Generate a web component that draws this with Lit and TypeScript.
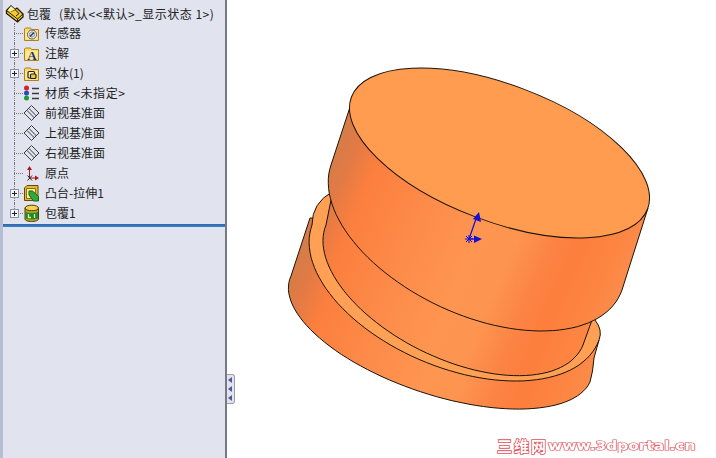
import { LitElement, html, css, svg } from "lit";
import { customElement } from "lit/decorators.js";

type P = [number, number];
/* lower half of an ellipse given its centre and two conjugate semi-diameters, from the left end to the right end */
const arc = (c: P, u: P, v: P) => {
  let d = "";
  for (let i = 0; i <= 60; i++) {
    const t = (Math.PI * i) / 60;
    const x = c[0] - u[0] * Math.cos(t) + v[0] * Math.sin(t);
    const y = c[1] - u[1] * Math.cos(t) + v[1] * Math.sin(t);
    d += `L${x.toFixed(1)} ${y.toFixed(1)}`;
  }
  return d;
};

const diskD = `M310 218${arc([440.5, 329], [149.5, 53], [-28, 60])}Q593 372 594 358L599 340L450 220Z`;
const ringD = `M332 192Q312 203 312 225${arc([455.5, 282.5], [143.5, 57.5], [-29, 80])}Q603 330 595 320L450 220Z`;
const innerD = `M332 195${arc([454.5, 285], [128.5, 60], [-28, 68])}L592 320L450 220Z`;
const topD = `M351 104${arc([476.5, 227.5], [145.5, 62.5], [-28.5, 82.5])}L648 208L500 100Z`;

const folder = (inner: unknown) => svg`<svg width="18" height="18" viewBox="0 0 18 18">
  <path d="M2.500 16.500V5l1-1h5l1 1.500h7v11z" fill="#ffdb62" stroke="#b07f1e"/>
  <rect x="3.500" y="7" width="12" height="8.500" fill="#ffe992"/>
  ${inner}
</svg>`;

const plane = svg`<svg width="20" height="18" viewBox="0 0 20 18" fill="none" stroke="#3a3a3a" stroke-width="1">
  <path d="M2 9 9.500 1.500 17 9l-7.500 7.500z"/><path d="M5 6.500 12.500 14M7 4.500 14.500 12"/>
</svg>`;

const icons: Record<string, unknown> = {
  sensor: folder(svg`<circle cx="10" cy="10.500" r="4.500" fill="#fff" stroke="#555"/><circle cx="10" cy="10.500" r="2.700" fill="#d4dbe8" stroke="#8593ad"/><path d="M8 12.500 12 8.500" stroke="#333" stroke-width="1.200"/>`),
  note: folder(svg`<text x="10" y="15.500" text-anchor="middle" font-family="Liberation Serif" font-weight="700" font-size="13" fill="#1c2f7a">A</text>`),
  body: folder(svg`<rect x="6" y="7.500" width="6.500" height="6.500" rx="1" fill="#fff2b0" stroke="#222" stroke-width="1.200"/><rect x="8.500" y="10" width="5.500" height="4.500" rx="1" fill="#e8c64a" stroke="#222" stroke-width="1.200"/>`),
  material: svg`<svg width="18" height="18" viewBox="0 0 18 18">
    <circle cx="4.500" cy="4" r="2.500" fill="#d8202a"/><circle cx="4.500" cy="9" r="2.500" fill="#2b46c0"/><circle cx="4.500" cy="14" r="2.500" fill="#1f9a38"/>
    <path d="M10 4.500h7M10 9.500h7M10 14.500h7" stroke="#3a3a3a" stroke-width="1.500"/></svg>`,
  plane,
  origin: svg`<svg width="18" height="18" viewBox="0 0 18 18" fill="none">
    <path d="M7.500 14V5" stroke="#a81818"/><path d="M7.500 2 10 6H5z" fill="#a81818"/>
    <path d="M7.500 14H14" stroke="#a81818"/><path d="M17 14l-4-2.500v5z" fill="#a81818"/>
    <path d="M5.500 11.500l4.500 5M10 11.500l-4.500 5" stroke="#222"/></svg>`,
  boss: svg`<svg width="18" height="18" viewBox="0 0 18 18">
    <path d="M2.500 4 5 1.500h11V13l-2 3.500H2.500z" fill="#e8b92f" stroke="#5e4a10"/>
    <path d="M4.500 4.500h9v10h-9z" fill="#ffea90" stroke="#8a7018"/>
    <path d="M7 7h3.500l6 5.500v4.500h-5L7 11z" fill="#2fa83c" stroke="#11661c"/></svg>`,
  wrap: svg`<svg width="18" height="18" viewBox="0 0 18 18">
    <path d="M3 4v11c0 1.500 3 2.500 6.500 2.500S16.500 16.500 16.500 15V4z" fill="#c8a020" stroke="#4e3c08"/>
    <ellipse cx="9.750" cy="4" rx="6.750" ry="2.800" fill="#f2d34c" stroke="#4e3c08"/>
    <path d="M3.500 8q6.250 2 12.500 0v6.500q-6.250 2-12.500 0z" fill="#1f8a2c"/>
    <path d="M6.500 10v3.500H9M12.500 10v4" stroke="#d8f0a0" stroke-width="1.300" fill="none"/></svg>`,
};

const rows = [
  { icon: "sensor", label: "传感器", exp: false, wide: false },
  { icon: "note", label: "注解", exp: true, wide: false },
  { icon: "body", label: "实体(1)", exp: true, wide: false },
  { icon: "material", label: "材质 <未指定>", exp: false, wide: true },
  { icon: "plane", label: "前视基准面", exp: false, wide: false },
  { icon: "plane", label: "上视基准面", exp: false, wide: false },
  { icon: "plane", label: "右视基准面", exp: false, wide: false },
  { icon: "origin", label: "原点", exp: false, wide: false },
  { icon: "boss", label: "凸台-拉伸1", exp: true, wide: false },
  { icon: "wrap", label: "包覆1", exp: true, wide: false },
];

const stops = svg`
  <stop offset="0" stop-color="#d67c48"/><stop offset=".05" stop-color="#e27a45"/>
  <stop offset=".13" stop-color="#fc7f3e"/><stop offset=".3" stop-color="#fd8a48"/>
  <stop offset=".5" stop-color="#fe9550"/><stop offset=".62" stop-color="#fd9450"/>
  <stop offset=".72" stop-color="#fc8444"/><stop offset=".8" stop-color="#fd7e3d"/>
  <stop offset=".92" stop-color="#fd8643"/><stop offset="1" stop-color="#f99050"/>`;

@customElement("app-root")
export class AppRoot extends LitElement {
  static styles = css`
    :host { display: flex; width: 716px; height: 458px; overflow: hidden; background: #fff;
      font-family: "Noto Sans CJK SC", "Liberation Sans", sans-serif; }
    .side { width: 226.500px; height: 458px; flex: none; box-sizing: border-box; background: #e1e4ee;
      border-left: 3px solid #b7bdd2; border-right: 2px solid #777a84; padding-top: 4px; }
    .root { display: flex; align-items: center; height: 19px; padding-left: 2px; gap: 2px;
      font-size: 12px; color: #222; white-space: nowrap; }
    .root .sp { margin-left: 6px; letter-spacing: 0.500px; }
    .row { display: flex; align-items: center; height: 20px; font-size: 12px; color: #222; white-space: nowrap; }
    .row .lab { padding-bottom: 1px; }
    .row .wide { letter-spacing: 0.550px; }
    .gutter { position: relative; width: 19px; height: 20px; flex: none; }
    .gutter::before { content: ""; position: absolute; left: 11px; top: 0; height: 100%;
      border-left: 1px dotted #777; }
    .gutter.last::before { height: 10px; }
    .gutter::after { content: ""; position: absolute; left: 11px; top: 10px; width: 9px;
      border-top: 1px dotted #777; }
    .exp { position: absolute; z-index: 1; left: 7px; top: 6px; width: 9px; height: 9px; box-sizing: border-box;
      border: 1px solid #8b93a8; background: #f4f5f8; }
    .exp::before { content: ""; position: absolute; left: 1px; right: 1px; top: 3px; height: 1px; background: #222; }
    .exp::after { content: ""; position: absolute; top: 1px; bottom: 1px; left: 3px; width: 1px; background: #222; }
    .ic { width: 20px; height: 18px; flex: none; margin-right: 3px; display: flex; position: relative; }
    .ic svg { display: block; }
    .rule { height: 3px; margin-top: 1px; background: linear-gradient(#2c66ad, #3d82c8); }
    .main { position: relative; flex: 1; height: 458px; }
    .scene { position: absolute; left: -226.500px; top: 0; width: 716px; height: 458px; display: block; }
    .grip { position: absolute; left: 0; top: 374px; width: 7px; height: 28px; background: #e1e4ee;
      border: 1px solid #9a9dac; border-left: 0; border-radius: 0 3px 3px 0; display: flex;
      flex-direction: column; align-items: center; justify-content: center; gap: 3px; }
    .grip i { width: 0; height: 0; border-style: solid; border-width: 3px 4px 3px 0;
      border-color: transparent #56568f transparent transparent; }
    .mark { position: absolute; left: 270.500px; top: 436px; display: flex; align-items: center; white-space: nowrap;
      font-weight: 700; line-height: 20px; color: #fff; -webkit-text-stroke: 1.600px #e0505a; paint-order: stroke fill; }
    .mark .cn { font-size: 15px; letter-spacing: 2px; }
    .mark .latin { font-family: "DejaVu Sans", sans-serif; font-size: 15.400px; display: inline-block;
      transform: scaleY(.74); }
  `;

  render() {
    return html`
      <div class="side">
        <div class="root">
          <svg width="20" height="18" viewBox="0 0 20 18">
            <path d="M1.500 5.500 6 1l4 3.500L12 3l6 6v3l-5.500 5L1.500 8.500z" fill="#f3c92f" stroke="#1c1a08" stroke-width="1.300"/>
            <path d="M1.500 5.500 12.500 14v3M12.500 14l5.500-5M6 6.500 10 4.500 14 8.500 11 11" fill="none" stroke="#1c1a08"/>
            <path d="M6 1 10 4.500 6 6.500 2.500 5.500z" fill="#fff0a0"/>
          </svg>
          <span>包覆</span><span class="sp">(默认<<默认>_显示状态 1>)</span>
        </div>
        ${rows.map((r, i) => html`
          <div class="row">
            <div class="gutter ${i === rows.length - 1 ? "last" : ""}">${r.exp ? html`<span class="exp"></span>` : ""}</div>
            <div class="ic">${icons[r.icon]}</div>
            <span class="lab ${r.wide ? "wide" : ""}">${r.label}</span>
          </div>`)}
        <div class="rule"></div>
      </div>
      <div class="main">
        <svg class="scene" viewBox="0 0 716 458">
          <defs>
            <linearGradient id="t" gradientUnits="userSpaceOnUse" x1="329" y1="168" x2="626" y2="300">${stops}</linearGradient>
            <linearGradient id="m" gradientUnits="userSpaceOnUse" x1="295" y1="250" x2="592" y2="382">${stops}</linearGradient>
            <linearGradient id="d" gradientUnits="userSpaceOnUse" x1="288" y1="283" x2="585" y2="415">${stops}</linearGradient>
          </defs>
          <g stroke="#1c1208" stroke-width="1" stroke-linejoin="round">
            <path fill="url(#d)" d=${diskD}/>
            <path fill="#ffa055" d=${ringD}/>
            <path fill="url(#m)" d=${innerD}/>
            <path fill="url(#t)" d=${topD}/>
            <ellipse cx="499.500" cy="153" rx="158.300" ry="68.300" transform="rotate(20.700 499.500 153)" fill="#ff9c50"/>
          </g>
          <g stroke="#1010d8" fill="#1010d8">
            <path d="M469 239 477 216" stroke-width="1.200" fill="none"/>
            <path d="M479 212 481 222 473 219Z" stroke="none"/>
            <path d="M469 239H476" stroke-width="1.200" fill="none"/>
            <path d="M482 239 474 235.500V243Z" stroke="none"/>
            <path d="M466 236l6 6M472 236l-6 6M469 235v8M465 239h8" stroke-width="1" fill="none"/>
          </g>
        </svg>
        <div class="grip"><i></i><i></i><i></i></div>
        <div class="mark"><span class="cn">三维网</span><span class="latin">www.3dportal.cn</span></div>
      </div>
    `;
  }
}
